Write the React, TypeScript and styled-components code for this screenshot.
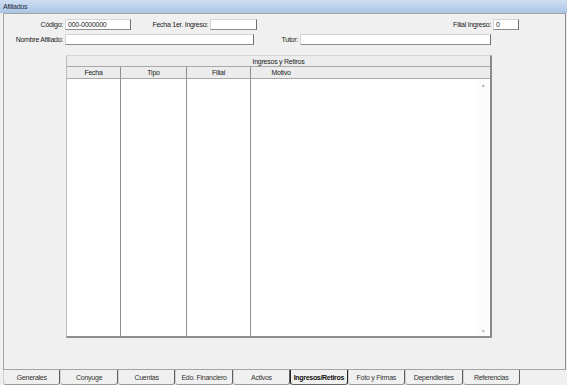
import styled, { createGlobalStyle } from "styled-components";

const GlobalStyle = createGlobalStyle`
  html, body {
    margin: 0;
    padding: 0;
    background: #f0f0f0;
  }
  body {
    font-family: "Liberation Sans", Arial, sans-serif;
    font-size: 7px;
    letter-spacing: -0.25px;
    color: #1b1b1b;
  }
`;

const Window = styled.div`
  width: 567px;
  height: 385px;
  display: flex;
  flex-direction: column;
  overflow: hidden;
  background: #f0f0f0;
`;

const TitleBar = styled.div`
  flex: 0 0 13px;
  display: flex;
  align-items: center;
  padding-left: 3px;
  background: linear-gradient(#cfdff2, #aac5e5);
  color: #1d2b3c;
  font-size: 7px;
`;

const Content = styled.div`
  flex: 1;
  display: flex;
  flex-direction: column;
  padding: 0 1px 0 3px;
`;

const Panel = styled.div`
  height: 357px;
  box-sizing: border-box;
  border: 1px solid #a3a3a3;
  border-right-color: #8a8a8a;
  display: flex;
  flex-direction: column;
  padding-top: 5px;
`;

const Row = styled.div`
  display: flex;
  align-items: center;
  height: 11px;
  margin-bottom: 4px;
`;

const Label = styled.span<{ $w?: number }>`
  flex: 0 0 ${({ $w }) => ($w ? `${$w}px` : "auto")};
  text-align: right;
  white-space: nowrap;
  padding-right: 2px;
  box-sizing: border-box;
`;

const Field = styled.div<{ $w: number }>`
  flex: 0 0 ${({ $w }) => $w}px;
  height: 11px;
  box-sizing: border-box;
  background: #fff;
  border-top: 1px solid #d4d4d4;
  border-left: 1px solid #d4d4d4;
  border-right: 1px solid #6e6e6e;
  border-bottom: 1px solid #8c8c8c;
  padding-left: 2px;
  line-height: 9px;
  white-space: nowrap;
`;

const Spacer = styled.div<{ $w?: number }>`
  flex: ${({ $w }) => ($w ? `0 0 ${$w}px` : "1")};
`;

const GridBox = styled.div`
  margin: 6px 0 0 62px;
  width: 426px;
  height: 283px;
  box-sizing: border-box;
  display: flex;
  flex-direction: column;
  border-top: 1px solid #d6d6d6;
  border-left: 1px solid #bdbdbd;
  border-right: 2px solid #8a8a8a;
  border-bottom: 2px solid #8f8f8f;
`;

const Caption = styled.div`
  flex: 0 0 10px;
  display: flex;
  align-items: center;
  justify-content: center;
  background: #ececec;
  border-bottom: 1px solid #a8a8a8;
`;

const HeaderRow = styled.div`
  flex: 0 0 11px;
  display: flex;
  background: #ececec;
  border-bottom: 1px solid #a8a8a8;
`;

const HeadCell = styled.div<{ $w?: number }>`
  flex: ${({ $w }) => ($w ? `0 0 ${$w}px` : "1")};
  box-sizing: border-box;
  display: flex;
  align-items: center;
  justify-content: center;
  border-right: 1px solid #8e8e8e;
  &:last-child {
    border-right: none;
    justify-content: flex-start;
  }
`;

const HeadText = styled.span<{ $w?: number }>`
  display: inline-block;
  width: ${({ $w }) => ($w ? `${$w}px` : "auto")};
  text-align: center;
`;

const Body = styled.div`
  flex: 1;
  display: flex;
  background: #fff;
`;

const Column = styled.div<{ $w?: number; $last?: boolean }>`
  flex: ${({ $w }) => ($w ? `0 0 ${$w}px` : "1")};
  box-sizing: border-box;
  border-right: ${({ $last }) => ($last ? "none" : "1px solid #8e8e8e")};
`;

const ScrollBar = styled.div`
  flex: 0 0 12px;
  display: flex;
  flex-direction: column;
  justify-content: space-between;
  align-items: center;
  background: #fcfcfc;
  margin-right: 1px;
  padding: 3px 0 2px;
  color: #b4b4b4;
  font-size: 5px;
`;

const TabRow = styled.div`
  display: flex;
  height: 15px;
`;

const Tab = styled.div<{ $active?: boolean }>`
  flex: 0 0 57.44px;
  box-sizing: border-box;
  display: flex;
  align-items: center;
  justify-content: center;
  white-space: nowrap;
  border-left: 1px solid ${({ $active }) => ($active ? "#222" : "#cfcfcf")};
  border-right: 1px solid ${({ $active }) => ($active ? "#222" : "#5f5f5f")};
  border-bottom: 1px solid ${({ $active }) => ($active ? "#666" : "#9a9a9a")};
  border-radius: 0 0 3px 3px;
  font-weight: ${({ $active }) => ($active ? 700 : 400)};
  letter-spacing: ${({ $active }) => ($active ? "-0.3px" : "-0.25px")};
  color: ${({ $active }) => ($active ? "#111" : "#333")};
  padding-top: 1px;
`;

const tabs = [
  "Generales",
  "Conyuge",
  "Cuentas",
  "Edo. Financiero",
  "Activos",
  "Ingresos/Retiros",
  "Foto y Firmas",
  "Dependientes",
  "Referencias",
];

export default function App() {
  return (
    <>
      <GlobalStyle />
      <Window>
        <TitleBar>Afiliados</TitleBar>
        <Content>
          <Panel>
            <Row>
              <Label $w={61}>Código:</Label>
              <Field $w={66}>000-0000000</Field>
              <Label $w={79}>Fecha 1er. Ingreso:</Label>
              <Field $w={47} />
              <Spacer />
              <Label>Filial Ingreso:</Label>
              <Field $w={26}>0</Field>
              <Spacer $w={46} />
            </Row>
            <Row>
              <Label $w={61}>Nombre Afiliado:</Label>
              <Field $w={189} />
              <Label $w={46}>Tutor:</Label>
              <Field $w={191} />
            </Row>
            <GridBox>
              <Caption>Ingresos y Retiros</Caption>
              <HeaderRow>
                <HeadCell $w={54}>Fecha</HeadCell>
                <HeadCell $w={66}>Tipo</HeadCell>
                <HeadCell $w={64}>Filial</HeadCell>
                <HeadCell>
                  <HeadText $w={60}>Motivo</HeadText>
                </HeadCell>
              </HeaderRow>
              <Body>
                <Column $w={54} />
                <Column $w={66} />
                <Column $w={64} />
                <Column $last />
                <ScrollBar>
                  <span>▲</span>
                  <span>▼</span>
                </ScrollBar>
              </Body>
            </GridBox>
          </Panel>
          <TabRow>
            {tabs.map((t) => (
              <Tab key={t} $active={t === "Ingresos/Retiros"}>
                {t}
              </Tab>
            ))}
          </TabRow>
        </Content>
      </Window>
    </>
  );
}
